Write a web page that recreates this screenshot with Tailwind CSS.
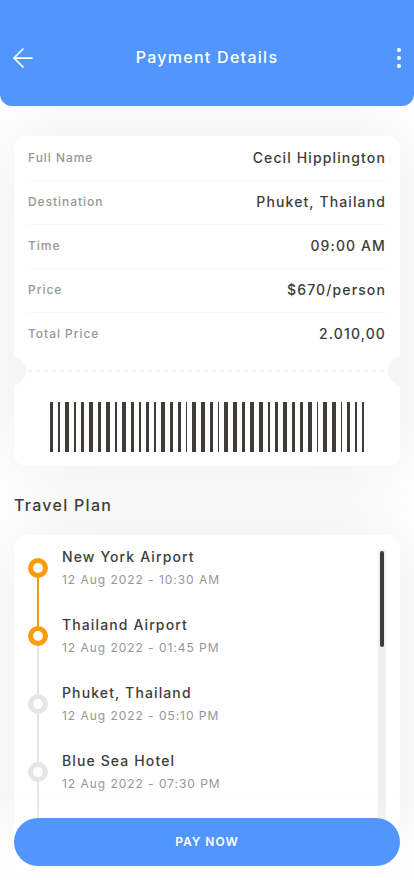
<!DOCTYPE html>
<html lang="en">
<head>
<meta charset="utf-8">
<meta name="viewport" content="width=device-width, initial-scale=1">
<title>Payment Details</title>
<script src="https://cdn.jsdelivr.net/npm/@tailwindcss/browser@4"></script>
</head>
<body class="flex h-screen flex-col overflow-hidden bg-[#fefefe] font-['Inter',sans-serif] font-medium text-[#403d39] **:tracking-[0.08em]">
  <header class="relative z-10 flex items-center justify-between rounded-b-xl bg-[#5195ff] px-3 pt-[46px] pb-9 text-white">
    <button type="button" aria-label="Back" class="w-6">
      <svg class="size-6" viewBox="0 0 24 24" fill="none" stroke="currentColor" stroke-width="1.75" stroke-linecap="round" stroke-linejoin="round" aria-hidden="true"><path d="M20 12H2M11 3L2 12L11 21"/></svg>
    </button>
    <h1 class="pb-[2px] text-base/[22px]">Payment Details</h1>
    <button type="button" aria-label="More options" class="flex w-6 justify-end">
      <svg class="h-6 w-[6px]" viewBox="0 0 6 24" fill="currentColor" aria-hidden="true"><circle cx="3" cy="4" r="2.100"/><circle cx="3" cy="12" r="2.100"/><circle cx="3" cy="20" r="2.100"/></svg>
    </button>
  </header>

  <main class="isolate flex min-h-0 flex-1 flex-col px-[14px] pt-[30px] pb-5">
    <section aria-label="Ticket" class="relative rounded-xl bg-white before:absolute before:inset-0 before:-z-10 before:rounded-xl before:shadow-[0_0_80px_rgba(0,0,0,0.07)]">
      <dl class="px-[14px] text-sm">
        <div class="flex h-11 items-center justify-between"><dt class="text-xs text-[#989694]">Full Name</dt><dd>Cecil Hipplington</dd></div>
        <div class="flex h-11 items-center justify-between border-t border-[#f8f8f8] pb-px"><dt class="text-xs text-[#989694]">Destination</dt><dd>Phuket, Thailand</dd></div>
        <div class="flex h-11 items-center justify-between border-t border-[#f8f8f8] pb-px"><dt class="text-xs text-[#989694]">Time</dt><dd>09:00 AM</dd></div>
        <div class="flex h-11 items-center justify-between border-t border-[#f8f8f8] pb-px"><dt class="text-xs text-[#989694]">Price</dt><dd>$670/person</dd></div>
        <div class="flex h-11 items-center justify-between border-t border-[#f8f8f8] pb-px"><dt class="text-xs text-[#989694]">Total Price</dt><dd>2.010,00</dd></div>
      </dl>
      <div class="flex h-[30px] items-center justify-between">
        <span class="flex w-3 justify-end overflow-hidden"><span class="size-[30px] shrink-0 rounded-full bg-[#f6f6f6]"></span></span>
        <span class="mx-[2px] h-[2px] flex-1 bg-[repeating-linear-gradient(90deg,#f3f3f3_0_4px,transparent_4px_8px)]"></span>
        <span class="flex w-3 overflow-hidden"><span class="size-[30px] shrink-0 rounded-full bg-[#f6f6f6]"></span></span>
      </div>
      <div class="flex justify-center pt-4 pb-[14px]">
        <svg class="h-[50px] w-[314px]" viewBox="0 0 314 50" fill="#403d39" shape-rendering="crispEdges" role="img" aria-label="Barcode">
          <path d="M0 0h3v50h-3zM8 0h2v50h-2zM15 0h4v50h-4zM24 0h2v50h-2zM31 0h3v50h-3zM39 0h4v50h-4zM48 0h3v50h-3zM56 0h4v50h-4zM65 0h2v50h-2zM72 0h4v50h-4zM81 0h3v50h-3zM89 0h2v50h-2zM96 0h3v50h-3zM104 0h2v50h-2zM111 0h4v50h-4zM120 0h3v50h-3zM128 0h3v50h-3zM136 0h1v50h-1zM142 0h4v50h-4zM151 0h4v50h-4zM160 0h3v50h-3zM168 0h1v50h-1zM174 0h4v50h-4zM183 0h4v50h-4zM192 0h3v50h-3zM200 0h4v50h-4zM209 0h4v50h-4zM218 0h2v50h-2zM225 0h3v50h-3zM233 0h4v50h-4zM242 0h3v50h-3zM250 0h3v50h-3zM258 0h4v50h-4zM267 0h1v50h-1zM273 0h4v50h-4zM282 0h4v50h-4zM291 0h1v50h-1zM297 0h3v50h-3zM305 0h2v50h-2zM312 0h2v50h-2z"/>
        </svg>
      </div>
    </section>

    <h2 class="pt-[27px] pb-[18px] text-base">Travel Plan</h2>

    <section aria-label="Travel plan" class="relative flex min-h-0 flex-1 justify-between rounded-xl bg-white p-[14px] pb-0 before:absolute before:inset-0 before:-z-10 before:rounded-xl before:shadow-[0_0_80px_rgba(0,0,0,0.07)]">
      <ol class="-mt-[2px] flex-1 overflow-hidden">
        <li class="flex h-[68px] gap-[14px]">
          <div class="flex flex-col items-center pt-[11px]"><span class="size-5 shrink-0 rounded-full border-[5px] border-[#fb9c0c]"></span><span class="-mb-[11px] w-[2px] flex-1 bg-[#e8a020]"></span></div>
          <div><h3 class="text-sm/5">New York Airport</h3><p class="pt-[3px] text-xs/5 font-normal text-[#989694]">12 Aug 2022 - 10:30 AM</p></div>
        </li>
        <li class="flex h-[68px] gap-[14px]">
          <div class="flex flex-col items-center pt-[11px]"><span class="size-5 shrink-0 rounded-full border-[5px] border-[#fb9c0c]"></span><span class="-mb-[11px] w-[2px] flex-1 bg-[#e6e5e3]"></span></div>
          <div><h3 class="text-sm/5">Thailand Airport</h3><p class="pt-[3px] text-xs/5 font-normal text-[#989694]">12 Aug 2022 - 01:45 PM</p></div>
        </li>
        <li class="flex h-[68px] gap-[14px]">
          <div class="flex flex-col items-center pt-[11px]"><span class="size-5 shrink-0 rounded-full border-[5px] border-[#e6e5e3]"></span><span class="-mb-[11px] w-[2px] flex-1 bg-[#e6e5e3]"></span></div>
          <div><h3 class="text-sm/5">Phuket, Thailand</h3><p class="pt-[3px] text-xs/5 font-normal text-[#989694]">12 Aug 2022 - 05:10 PM</p></div>
        </li>
        <li class="flex h-[68px] gap-[14px]">
          <div class="flex flex-col items-center pt-[11px]"><span class="size-5 shrink-0 rounded-full border-[5px] border-[#e6e5e3]"></span><span class="-mb-[11px] w-[2px] flex-1 bg-[#e6e5e3]"></span></div>
          <div><h3 class="text-sm/5">Blue Sea Hotel</h3><p class="pt-[3px] text-xs/5 font-normal text-[#989694]">12 Aug 2022 - 07:30 PM</p></div>
        </li>
      </ol>
      <div class="w-2 rounded-t-full bg-[#efefef] p-[2px]"><div class="h-24 rounded-full bg-[#403d39]"></div></div>
    </section>
  </main>

  <footer class="fixed inset-x-0 bottom-0 bg-linear-to-b from-white/0 to-white to-90% px-[14px] pt-7 pb-[30px]">
    <button type="button" class="h-12 w-full rounded-full bg-[#5195ff] text-xs font-semibold text-white">PAY NOW</button>
  </footer>
</body>
</html>
